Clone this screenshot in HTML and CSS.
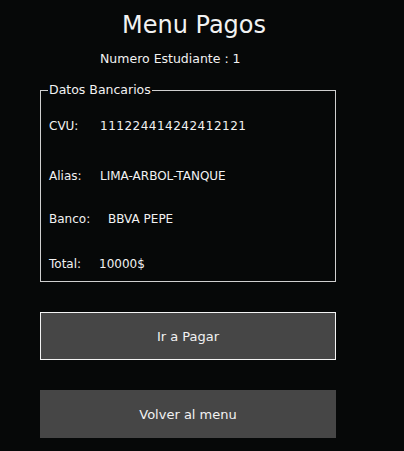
FILE: index.html
```html
<!DOCTYPE html>
<html lang="es">
<head>
<meta charset="utf-8">
<title>Menu Pagos</title>
<link rel="stylesheet" href="styles.css">
</head>
<body>
<main class="page">
  <h1 class="title">Menu Pagos</h1>
  <p class="student">Numero Estudiante : 1</p>
  <fieldset class="bank">
    <legend class="bank-legend">Datos Bancarios</legend>
    <div class="row row-cvu"><span class="label">CVU:</span><span class="value value-cvu">111224414242412121</span></div>
    <div class="row row-alias"><span class="label">Alias:</span><span class="value">LIMA-ARBOL-TANQUE</span></div>
    <div class="row row-banco"><span class="label">Banco:</span><span class="value">BBVA PEPE</span></div>
    <div class="row row-total"><span class="label">Total:</span><span class="value">10000$</span></div>
  </fieldset>
  <button class="btn btn-pay" type="button">Ir a Pagar</button>
  <button class="btn btn-back" type="button">Volver al menu</button>
</main>
</body>
</html>
```
FILE: styles.css
```css
html, body {
  margin: 0;
  background: #060808;
}
body {
  width: 404px;
  height: 451px;
  overflow: hidden;
  font-family: "DejaVu Sans", sans-serif;
  color: #f2f2f2;
}
.page {
  width: 296px;
  padding: 10px 0 0 40px;
  display: flex;
  flex-direction: column;
}
.title {
  margin: 0;
  padding-left: 12px;
  text-align: center;
  font-size: 24px;
  font-weight: normal;
  line-height: 30px;
}
.student {
  margin: 11px 0 0 60px;
  font-size: 12.5px;
  line-height: 16px;
}
.bank {
  margin: 16px 0 0 0;
  padding: 0 0 9px 8px;
  border: 1px solid #cfcfcf;
  min-width: 0;
}
.bank-legend {
  padding: 0 1px;
  margin-left: -1px;
  font-size: 12.5px;
  line-height: 14px;
}
.row {
  font-size: 12px;
  line-height: 16px;
  display: flex;
}
.value-cvu { letter-spacing: 0.5px; }
.row-cvu { margin-top: 21px; }
.row-alias { margin-top: 34px; }
.row-banco { margin-top: 27px; }
.row-total { margin-top: 29px; }
.row-cvu .label { width: 51px; }
.row-alias .label { width: 51px; }
.row-banco .label { width: 59px; }
.row-total .label { width: 50px; }
.btn {
  width: 296px;
  height: 48px;
  box-sizing: border-box;
  background: #464646;
  color: #f2f2f2;
  font-family: inherit;
  font-size: 13px;
  padding: 0;
}
.btn-pay {
  margin-top: 30px;
  border: 1px solid #f4f4f4;
}
.btn-back {
  margin-top: 30px;
  border: none;
}
```
